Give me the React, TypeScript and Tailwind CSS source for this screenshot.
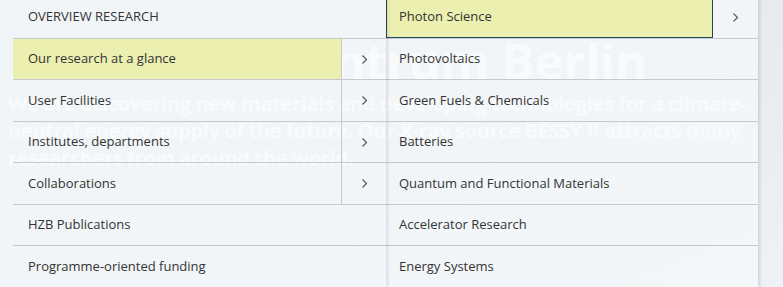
/* eslint-disable */
import React from "react";

const left = [
  { label: "Our research at a glance", sub: true, active: true, h: "h-[41px]" },
  { label: "User Facilities", sub: true, h: "h-[42px]" },
  { label: "Institutes, departments", sub: true, h: "h-[41px]" },
  { label: "Collaborations", sub: true, h: "h-[42px]" },
  { label: "HZB Publications", h: "h-[41px]" },
  { label: "Programme-oriented funding", h: "h-[42px]" },
];

const right = [
  { label: "Photovoltaics", h: "h-[41px]" },
  { label: "Green Fuels & Chemicals", h: "h-[42px]" },
  { label: "Batteries", h: "h-[41px]" },
  { label: "Quantum and Functional Materials", h: "h-[42px]" },
  { label: "Accelerator Research", h: "h-[41px]" },
  { label: "Energy Systems", h: "h-[42px]" },
];

function Chevron() {
  return (
    <svg width="7" height="11" viewBox="0 0 7 11" fill="none">
      <polyline points="1.5,1.5 5.5,5.5 1.5,9.5" stroke="#555b61" strokeWidth="1.2" />
    </svg>
  );
}

export default function App() {
  return (
    <div
      className="relative w-[783px] h-[287px] overflow-hidden bg-gradient-to-br from-[#e3e9ef] via-[#e6ebf0] to-[#eef1f5] text-[#333] text-[13px]"
      style={{ fontFamily: '"Open Sans", "Noto Sans", sans-serif' }}
    >
      {/* hero behind the menu */}
      <div className="pl-[8px] pt-[30px] text-white font-bold">
        <h1 className="text-[50px] leading-[62px] tracking-[-0.6px]">Helmholtz-Zentrum Berlin</h1>
        <p className="text-[20px] leading-[27px] tracking-[-0.35px] w-[770px] mt-[-2px]">
          We are discovering new materials and developing technologies for a climate-neutral energy supply of the future. Our X-ray source BESSY II attracts many researchers from around the world.
        </p>
      </div>

      {/* dropdown menu */}
      <div className="absolute top-0 left-0 flex h-[287px]">
        <div className="w-[386px] bg-[#f6f8fa]/75 shadow-[2px_0_3px_rgba(0,0,0,0.10)] z-10">
          <div className="h-[38px] flex items-center pl-[28px] pb-[4px] uppercase">Overview Research</div>
          <div className="ml-[13px]">
            {left.map((it) => (
              <div key={it.label} className={`flex border-t border-[#c6c9cd] ${it.h}`}>
                <div className={`flex-1 flex items-center pl-[15px] ${it.active ? "bg-[#ebefb0]" : ""}`}>
                  {it.label}
                </div>
                {it.sub && (
                  <div className="w-[45px] flex items-center justify-center border-l border-[#c6c9cd]">
                    <Chevron />
                  </div>
                )}
              </div>
            ))}
          </div>
        </div>
        <div className="w-[372px] bg-[#f6f8fa]/75 shadow-[2px_0_3px_rgba(0,0,0,0.12)]">
          <div className="flex h-[38px]">
            <div className="w-[327px] flex items-center pl-[12px] pb-[4px] bg-[#ebefb0] border border-t-0 border-[#24495a]">
              Photon Science
            </div>
            <div className="flex-1 flex items-center justify-center pb-[4px]">
              <Chevron />
            </div>
          </div>
          {right.map((it) => (
            <div key={it.label} className={`flex items-center pl-[13px] border-t border-[#c6c9cd] ${it.h}`}>
              {it.label}
            </div>
          ))}
        </div>
      </div>
    </div>
  );
}
